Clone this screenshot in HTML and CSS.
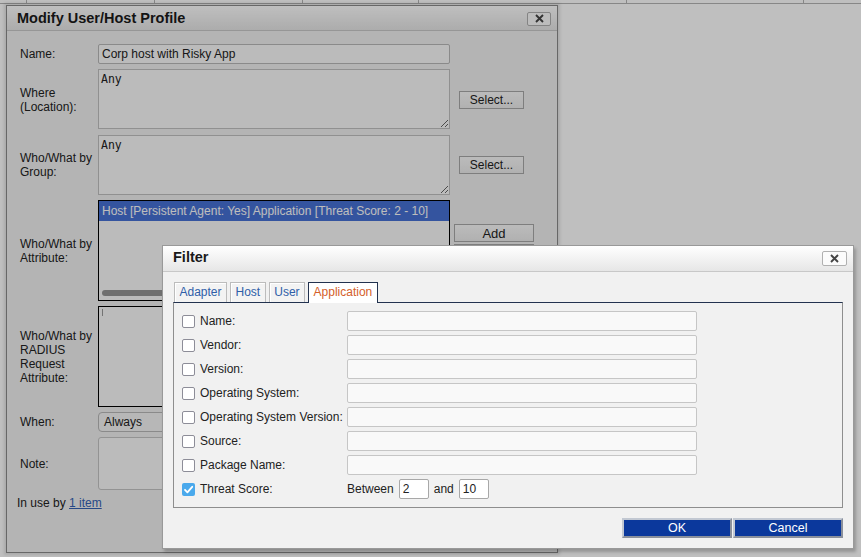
FILE: index.html
```html
<!DOCTYPE html>
<html lang="en">
<head>
    <meta charset="UTF-8">
    <title>Modify User/Host Profile</title>
    <link rel="stylesheet" href="styles.css">
</head>
<body>
    <div class="table-head">
        <span class="col col-a"></span>
        <span class="col col-b"></span>
        <span class="col col-c"></span>
        <span class="col col-d"></span>
        <span class="col col-e"></span>
        <span class="col col-f"></span>
    </div>

    <div class="dialog profile-dialog">
        <div class="dialog-title">
            <h2>Modify User/Host Profile</h2>
            <button class="close-btn" type="button">
                <svg width="9" height="9" viewBox="0 0 9 9"><path d="M1 1L8 8M8 1L1 8" stroke="#444" stroke-width="1.9" fill="none"/></svg>
            </button>
        </div>
        <div class="dialog-body">
            <div class="profile-form">
                <label class="row-label">Name:</label>
                <input class="field text-field" type="text" value="Corp host with Risky App">
                <div></div>

                <label class="row-label">Where<br>(Location):</label>
                <textarea class="field area-field" readonly>Any</textarea>
                <div class="side"><button class="btn-small btn-select" type="button">Select...</button></div>

                <label class="row-label">Who/What by<br>Group:</label>
                <textarea class="field area-field" readonly>Any</textarea>
                <div class="side"><button class="btn-small btn-select" type="button">Select...</button></div>

                <label class="row-label">Who/What by<br>Attribute:</label>
                <div class="field list-box">
                    <div class="list-item selected">Host [Persistent Agent: Yes] Application [Threat Score: 2 - 10]</div>
                    <div class="list-scroll"></div>
                </div>
                <div class="side side-stack">
                    <button class="btn-small btn-wide" type="button">Add</button>
                    <button class="btn-small btn-wide" type="button">Edit</button>
                    <button class="btn-small btn-wide" type="button">Remove</button>
                </div>

                <label class="row-label">Who/What by<br>RADIUS<br>Request<br>Attribute:</label>
                <div class="field list-box">
                    <span class="caret"></span>
                </div>
                <div></div>

                <label class="row-label">When:</label>
                <div class="field select-field">Always</div>
                <div></div>

                <label class="row-label">Note:</label>
                <textarea class="field note-field" readonly></textarea>
                <div></div>
            </div>
            <p class="in-use">In use by <a href="#">1 item</a></p>
        </div>
    </div>

    <div class="overlay"></div>

    <div class="dialog filter-dialog">
        <div class="dialog-title">
            <h2>Filter</h2>
            <button class="close-btn" type="button">
                <svg width="9" height="9" viewBox="0 0 9 9"><path d="M1 1L8 8M8 1L1 8" stroke="#444" stroke-width="1.9" fill="none"/></svg>
            </button>
        </div>
        <div class="filter-body">
            <div class="tabs">
                <span class="tab">Adapter</span>
                <span class="tab">Host</span>
                <span class="tab">User</span>
                <span class="tab active">Application</span>
            </div>
            <div class="tab-panel">
                <div class="filter-row">
                    <label class="check-label"><span class="check"></span>Name:</label>
                    <input class="filter-input" type="text">
                </div>
                <div class="filter-row">
                    <label class="check-label"><span class="check"></span>Vendor:</label>
                    <input class="filter-input" type="text">
                </div>
                <div class="filter-row">
                    <label class="check-label"><span class="check"></span>Version:</label>
                    <input class="filter-input" type="text">
                </div>
                <div class="filter-row">
                    <label class="check-label"><span class="check"></span>Operating System:</label>
                    <input class="filter-input" type="text">
                </div>
                <div class="filter-row">
                    <label class="check-label"><span class="check"></span>Operating System Version:</label>
                    <input class="filter-input" type="text">
                </div>
                <div class="filter-row">
                    <label class="check-label"><span class="check"></span>Source:</label>
                    <input class="filter-input" type="text">
                </div>
                <div class="filter-row">
                    <label class="check-label"><span class="check"></span>Package Name:</label>
                    <input class="filter-input" type="text">
                </div>
                <div class="filter-row">
                    <label class="check-label">
                        <span class="check checked">
                            <svg width="13" height="13" viewBox="0 0 13 13"><path d="M3 6.8L5.4 9.3L10.2 3.8" stroke="#fff" stroke-width="1.8" fill="none" stroke-linecap="round" stroke-linejoin="round"/></svg>
                        </span>Threat Score:
                    </label>
                    <div class="range">
                        Between <input class="range-input" type="text" value="2">
                        and <input class="range-input" type="text" value="10">
                    </div>
                </div>
            </div>
            <div class="dialog-buttons">
                <button class="btn-primary" type="button">OK</button>
                <button class="btn-primary" type="button">Cancel</button>
            </div>
        </div>
    </div>
</body>
</html>
```

FILE: styles.css
```css
* {
    margin: 0;
    padding: 0;
    box-sizing: border-box;
}

body {
    font-family: 'Liberation Sans', Arial, sans-serif;
    font-size: 12px;
    color: #282828;
    background: #fff;
    width: 861px;
    height: 557px;
    overflow: hidden;
    position: relative;
}

/* page behind the dialogs */
.table-head {
    display: flex;
    height: 4px;
    border-bottom: 1px solid #b4b4b4;
}

.col {
    border-right: 1px solid #b4b4b4;
}

.col-a { width: 27px; }
.col-b { width: 128px; }
.col-c { width: 148px; }
.col-d { width: 116px; }
.col-e { width: 208px; }
.col-f { width: 177px; }

.overlay {
    position: absolute;
    inset: 0;
    background: rgba(0, 0, 0, 0.25);
}

/* dialogs */
.dialog {
    position: absolute;
    background: #f1f1f1;
    border: 1px solid #8a8a8a;
    display: flex;
    flex-direction: column;
}

.profile-dialog {
    left: 6px;
    top: 5px;
    width: 552px;
    height: 548px;
    box-shadow: 0 0 3px 2px rgba(0, 0, 0, 0.12);
}

.filter-dialog {
    left: 162px;
    top: 245px;
    width: 692px;
    height: 304px;
    border-color: #999;
    box-shadow: 2px 3px 3px rgba(0, 0, 0, 0.22);
}

.dialog-title {
    height: 25px;
    flex-shrink: 0;
    display: flex;
    align-items: center;
    justify-content: space-between;
    padding: 0 6px 0 10px;
    background: linear-gradient(#ffffff, #e6e6e6);
    border-bottom: 1px solid #c8c8c8;
}

.filter-dialog .dialog-title {
    height: 26px;
}

.filter-dialog .dialog-title h2 {
    margin-top: -3px;
}

.dialog-title h2 {
    font-size: 14.5px;
    font-weight: bold;
    color: #1a1a1a;
}

.close-btn {
    width: 25px;
    height: 15px;
    display: flex;
    align-items: center;
    justify-content: center;
    background: #fbfbfb;
    border: 1px solid #b0b0b0;
    border-radius: 2px;
}

.filter-dialog .close-btn {
    margin-top: -1px;
}

.profile-dialog .close-btn {
    width: 24px;
    height: 14px;
    margin-top: 1px;
}

/* profile form */
.dialog-body {
    padding: 13px 0 0 13px;
}

.profile-form {
    display: grid;
    grid-template-columns: 78px 352px 1fr;
    grid-template-rows: 20px 61px 60px 101px 101px 20px 53px;
    row-gap: 5px;
}

.row-label {
    align-self: center;
    line-height: 14px;
    color: #222;
}

.field {
    background: #fafafa;
    border: 1px solid #c0c0c0;
    color: #222;
    width: 100%;
    height: 100%;
}

.text-field {
    font-family: 'Liberation Sans', Arial, sans-serif;
    font-size: 12px;
    padding: 0 3px;
    border-radius: 2px;
    border-color: #b8b8b8;
}

.area-field {
    font-family: 'DejaVu Sans Mono', monospace;
    font-size: 11.5px;
    padding: 2px 2px;
    resize: both;
    height: 60px;
}

.list-box {
    border-color: #000;
    display: flex;
    flex-direction: column;
    overflow: hidden;
}

.list-item {
    height: 20px;
    line-height: 20px;
    padding-left: 3px;
    white-space: nowrap;
}

.list-item.selected {
    background: #4670d4;
    color: #fdfdfd;
}

.list-scroll {
    margin: auto 0 4px 3px;
    width: 240px;
    height: 6px;
    border-radius: 3px;
    background: #959595;
}

.caret {
    width: 1px;
    height: 7px;
    margin: 2px 0 0 3px;
    background: #9a9a9a;
}

.select-field {
    border-radius: 4px;
    padding-left: 5px;
    line-height: 18px;
    border-color: #b8b8b8;
    background: #f4f4f4;
}

.note-field {
    border-radius: 3px;
    resize: none;
    border-color: #c4c4c4;
}

.side {
    align-self: center;
    padding-left: 9px;
}

.side-stack {
    align-self: start;
    padding: 24px 0 0 4px;
    display: flex;
    flex-direction: column;
    gap: 2px;
}

.btn-small {
    font-family: 'Liberation Sans', Arial, sans-serif;
    font-size: 12px;
    height: 18px;
    color: #222;
    background: linear-gradient(#fafafa, #ececec);
    border: 1px solid #a8a8a8;
}

.btn-select {
    width: 65px;
}

.btn-wide {
    width: 80px;
    font-size: 13px;
}

.in-use {
    margin: 6px 0 0 -3px;
    line-height: 14px;
    color: #222;
}

.in-use a {
    color: #3462b4;
}

/* filter dialog */
.filter-body {
    padding: 10px 10px 0;
    flex: 1;
    display: flex;
    flex-direction: column;
}

.tabs {
    display: flex;
    align-items: flex-end;
    gap: 3px;
    height: 20px;
    padding-left: 1px;
}

.tab {
    height: 20px;
    line-height: 19px;
    padding: 0 4.5px;
    color: #2f5ea8;
    background: #f3f3f3;
    border: 1px solid #bcbcbc;
    border-bottom: none;
    box-shadow: inset 1px 1px 0 #fff;
}

.tab.active {
    height: 21px;
    margin-bottom: -1px;
    position: relative;
    color: #d4602a;
    background: #fff;
    border-color: #22324f;
    box-shadow: none;
}

.tab-panel {
    height: 206px;
    border: 1px solid #8e8e8e;
    border-top-color: #22324f;
    padding: 8px 8px 0;
    display: flex;
    flex-direction: column;
    gap: 4px;
}

.filter-row {
    display: grid;
    grid-template-columns: 165px 350px;
    height: 20px;
    align-items: center;
}

.check-label {
    display: flex;
    align-items: center;
    gap: 5px;
    color: #222;
    white-space: nowrap;
}

.check {
    width: 13px;
    height: 13px;
    flex-shrink: 0;
    border: 1.5px solid #8d8d98;
    border-radius: 2px;
    background: #fff;
}

.check.checked {
    border: none;
    background: #4aa9ec;
}

.check svg {
    display: block;
}

.filter-input {
    height: 20px;
    width: 350px;
    background: #f9f9f9;
    border: 1px solid #c6c6c6;
    border-radius: 2px;
}

.range {
    display: flex;
    align-items: center;
    gap: 5px;
    color: #222;
}

.range-input {
    width: 30px;
    height: 20px;
    padding: 0 3px;
    font-family: 'Liberation Sans', Arial, sans-serif;
    font-size: 12px;
    color: #222;
    background: #fff;
    border: 1px solid #a8a8a8;
    border-radius: 2px;
}

.dialog-buttons {
    display: flex;
    justify-content: flex-end;
    gap: 1px;
    margin-top: 10px;
}

.btn-primary {
    width: 110px;
    height: 20px;
    font-family: 'Liberation Sans', Arial, sans-serif;
    font-size: 12.5px;
    color: #fff;
    background: #0b389c;
    border: 2px solid;
    border-color: #c2c8d2 #8a909c #8a909c #c2c8d2;
}
```
